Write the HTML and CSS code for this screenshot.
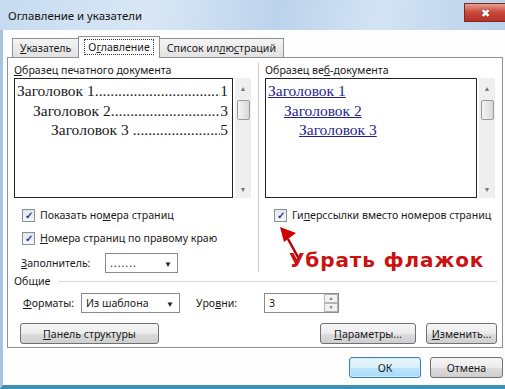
FILE: index.html
```html
<!DOCTYPE html>
<html lang="ru">
<head>
<meta charset="UTF-8">
<title>Оглавление и указатели</title>
<link rel="stylesheet" href="styles.css">
</head>
<body>
<div class="window">
  <div class="titlebar">
    <span class="title">Оглавление и указатели</span>
    <span class="close">&#x2716;</span>
  </div>

  <div class="tabs">
    <div class="tab"><u>У</u>казатель</div>
    <div class="tab active"><span class="focus">О<u>г</u>лавление</span></div>
    <div class="tab">Список ил<u>л</u>ю<u>с</u>траций</div>
  </div>

  <div class="panel">
    <div class="previews">
      <div class="col">
        <div class="label"><u>О</u>бразец печатного документа</div>
        <div class="preview-row">
          <div class="preview">
            <div class="toc l1"><span>Заголовок 1</span><span class="dots"></span><span>1</span></div>
            <div class="toc l2"><span>Заголовок 2</span><span class="dots"></span><span>3</span></div>
            <div class="toc l3"><span>Заголовок 3&nbsp;</span><span class="dots"></span><span>5</span></div>
          </div>
          <div class="scroll"><span class="arr">&#9650;</span><span class="thumb"></span><span class="grow"></span><span class="arr">&#9660;</span></div>
        </div>
        <div class="check first"><span class="box">&#10003;</span>Показать но<u>м</u>ера страниц</div>
        <div class="check"><span class="box">&#10003;</span><u>Н</u>омера страниц по правому краю</div>
        <div class="field">
          <span class="flabel"><u>З</u>аполнитель:</span>
          <span class="select small">.......<span class="caret">&#9660;</span></span>
        </div>
      </div>
      <div class="sep"></div>
      <div class="col right">
        <div class="label">Образец ве<u>б</u>-документа</div>
        <div class="preview-row">
          <div class="preview web">
            <div class="link l1">Заголовок 1</div>
            <div class="link l2">Заголовок 2</div>
            <div class="link l3">Заголовок 3</div>
          </div>
          <div class="scroll"><span class="arr">&#9650;</span><span class="thumb"></span><span class="grow"></span><span class="arr">&#9660;</span></div>
        </div>
        <div class="check first"><span class="box">&#10003;</span>Ги<u>п</u>ерссылки вместо номеров страниц</div>
        <div class="note">
          <svg class="arrow" width="30" height="34" viewBox="0 0 30 34">
            <path d="M22 33 L11 13" stroke="#b00000" stroke-width="2.5" fill="none"/>
            <path d="M3 1 L19 7 L7 16 Z" fill="#d00000"/>
          </svg>
          <span class="note-text">Убрать флажок</span>
        </div>
      </div>
    </div>

    <div class="group">
      <span>Общие</span><span class="line"></span>
    </div>
    <div class="formats">
      <span class="flabel"><u>Ф</u>орматы:</span>
      <span class="select wide">Из шаблона<span class="caret">&#9660;</span></span>
      <span class="flabel levels">Уро<u>в</u>ни:</span>
      <span class="spin">3<span class="spin-btns"><span>&#9650;</span><span>&#9660;</span></span></span>
    </div>
    <div class="actions">
      <button class="btn outline"><u>П</u>анель структуры</button>
      <span class="grow"></span>
      <button class="btn params"><u>П</u>араметры...</button>
      <button class="btn change"><u>И</u>зменить...</button>
    </div>
  </div>

  <div class="footer">
    <button class="btn ok">ОК</button>
    <button class="btn cancel">Отмена</button>
  </div>
</div>
</body>
</html>
```

FILE: styles.css
```css
body {
  margin: 0;
  width: 505px;
  height: 389px;
  overflow: hidden;
  font-family: "Noto Sans", "Open Sans", sans-serif;
  font-size: 10.6px;
  color: #1a1a1a;
  background: #ffffff;
}

.window {
  position: relative;
  height: 389px;
  box-sizing: border-box;
  border-left: 3px solid #a9c4e2;
  border-bottom: 4px solid #3d8fb8;
  background: #fdfdfd;
}

.titlebar {
  height: 30px;
  display: flex;
  align-items: center;
  justify-content: space-between;
  background: linear-gradient(100deg, #c6dbf0 0%, #d9e7f5 30%, #bcd3ec 55%, #d3e3f3 75%, #b9d1ea 100%);
  margin-left: -3px;
  padding-left: 8px;
}

.title {
  font-size: 11.4px;
  color: #111;
}

.close {
  align-self: flex-start;
  margin-top: 3px;
  width: 40px;
  height: 17px;
  background: linear-gradient(#e8a090, #c8463a 50%, #b8322a);
  border: 1px solid #7b2a22;
  border-right: none;
  color: #fff;
  font-size: 11px;
  text-align: center;
  line-height: 17px;
  text-shadow: 0 0 2px #6a1a10;
}

.tabs {
  display: flex;
  padding-left: 9px;
  margin-top: 6px;
  height: 21px;
  align-items: flex-end;
}

.tab {
  height: 18px;
  padding: 0 7px;
  line-height: 18px;
  border: 1px solid #8e9196;
  border-bottom: none;
  border-right: none;
  background: linear-gradient(#f4f4f4, #e2e2e2);
}

.tab:last-child {
  border-right: 1px solid #8e9196;
}

.tab.active {
  height: 21px;
  line-height: 20px;
  background: #fff;
  border-right: 1px solid #8e9196;
  position: relative;
  z-index: 1;
  margin-bottom: -1px;
  padding: 0 5px;
}

.tab.active + .tab {
  border-left: none;
}

.focus {
  border: 1px dotted #333;
  padding: 0 3px;
}

.panel {
  margin: 0 2px 0 4px;
  border: 1px solid #8e9196;
  background: #fff;
  padding: 5px 5px 6px 6px;
  height: 291px;
  box-sizing: border-box;
}

.previews {
  display: flex;
  height: 209px;
}

.col {
  flex: none;
  width: 237px;
}

.col.right {
  width: 230px;
  position: relative;
}

.sep {
  flex: none;
  width: 1px;
  background: #c8c8c8;
  margin: 0 6px 0 7px;
}

.label {
  height: 14px;
  line-height: 14px;
  margin-bottom: 1px;
}

.preview-row {
  display: flex;
  height: 120px;
}

.preview {
  flex: 1;
  min-width: 0;
  border: 1px solid #222;
  padding: 2px 4px 0 2px;
  font-family: "Liberation Serif", "DejaVu Serif", serif;
  font-size: 15.5px;
  line-height: 19.5px;
}

.toc {
  display: flex;
}

.toc.l2 { padding-left: 16px; }
.toc.l3 { padding-left: 34px; }

.dots {
  flex: 1;
  min-width: 0;
  overflow: hidden;
  white-space: nowrap;
}

.dots::before {
  content: "..................................................";
}

.web {
  padding-left: 2px;
}

.link {
  color: #1f1f8c;
  text-decoration: underline;
}

.link.l2 { padding-left: 16px; }
.link.l3 { padding-left: 31px; }

.scroll {
  flex: none;
  width: 16px;
  margin-left: 2px;
  background: #efefef;
  display: flex;
  flex-direction: column;
  align-items: center;
  padding: 6px 0 4px;
  box-sizing: border-box;
}

.arr {
  font-size: 7px;
  color: #7a7a7a;
  line-height: 9px;
}

.thumb {
  width: 13px;
  height: 20px;
  margin-top: 7px;
  border: 1px solid #9a9a9a;
  border-radius: 2px;
  background: linear-gradient(90deg, #f4f4f4, #d8d8d8);
  box-sizing: border-box;
}

.grow {
  flex: 1;
}

.check {
  display: flex;
  align-items: center;
  height: 14px;
  margin-top: 9px;
  padding-left: 8px;
  white-space: nowrap;
}

.check.first {
  margin-top: 10px;
}

.col.right .check {
  padding-left: 9px;
}

.box {
  flex: none;
  width: 11px;
  height: 11px;
  border: 1px solid #8f8f8f;
  background: linear-gradient(#dfe7f1, #f5f7fa);
  font-size: 10px;
  line-height: 11px;
  text-align: center;
  color: #2b3d70;
  font-weight: bold;
  margin-right: 5px;
}

.field {
  display: flex;
  align-items: center;
  margin-top: 8px;
  padding-left: 7px;
}

.flabel {
  width: 84px;
}

.select {
  display: flex;
  align-items: center;
  justify-content: space-between;
  height: 20px;
  border: 1px solid #8a8a8a;
  padding: 0 5px 0 4px;
  box-sizing: border-box;
  background: #fff;
}

.select.small {
  width: 73px;
  letter-spacing: 1px;
}

.select.wide {
  width: 99px;
}

.caret {
  font-size: 8px;
  color: #222;
  letter-spacing: 0;
}

.note {
  position: absolute;
  left: 12px;
  top: 163px;
  width: 220px;
}

.arrow {
  display: block;
}

.note-text {
  position: absolute;
  left: 12px;
  top: 22px;
  font-family: "DejaVu Sans", sans-serif;
  font-weight: bold;
  font-size: 20px;
  color: #cc1111;
  letter-spacing: 0.9px;
  white-space: nowrap;
}

.group {
  display: flex;
  align-items: center;
  height: 14px;
  margin-top: 2px;
}

.line {
  flex: 1;
  height: 1px;
  background: #d5d5d5;
  margin-left: 9px;
}

.formats {
  display: flex;
  align-items: center;
  margin-top: 5px;
  padding-left: 9px;
}

.formats .flabel {
  width: 58px;
}

.formats .levels {
  width: 68px;
  margin-left: 16px;
}

.spin {
  display: flex;
  align-items: center;
  justify-content: space-between;
  width: 75px;
  height: 20px;
  border: 1px solid #8a8a8a;
  box-sizing: border-box;
  padding-left: 4px;
}

.spin-btns {
  display: flex;
  flex-direction: column;
  width: 14px;
  height: 18px;
  font-size: 5px;
  line-height: 9px;
  text-align: center;
  color: #777;
}

.spin-btns span {
  border: 1px solid #b5b5b5;
  background: #f2f2f2;
  height: 7px;
  line-height: 7px;
}

.actions {
  display: flex;
  margin-top: 10px;
  padding-left: 6px;
}

.btn {
  font-family: "Noto Sans", "Open Sans", sans-serif;
  font-size: 10.6px;
  height: 21px;
  padding: 0;
  border: 1px solid #707070;
  border-radius: 3px;
  background: linear-gradient(#f6f6f6, #ebebeb 50%, #dddddd 51%, #cfcfcf);
  color: #1a1a1a;
}

.btn.outline { width: 139px; }
.btn.params { width: 96px; margin-right: 10px; }
.btn.change { width: 71px; }

.footer {
  display: flex;
  justify-content: flex-end;
  padding: 9px 0 0;
  margin-right: 2px;
}

.btn.ok {
  width: 72px;
  margin-right: 9px;
  border-color: #3c7fb1;
  background: linear-gradient(#eaf6fd, #d9f0fc 50%, #bee6fd 51%, #a7d9f5);
  box-shadow: inset 0 0 0 1px #cfeafc;
}

.btn.cancel {
  width: 73px;
}
```
